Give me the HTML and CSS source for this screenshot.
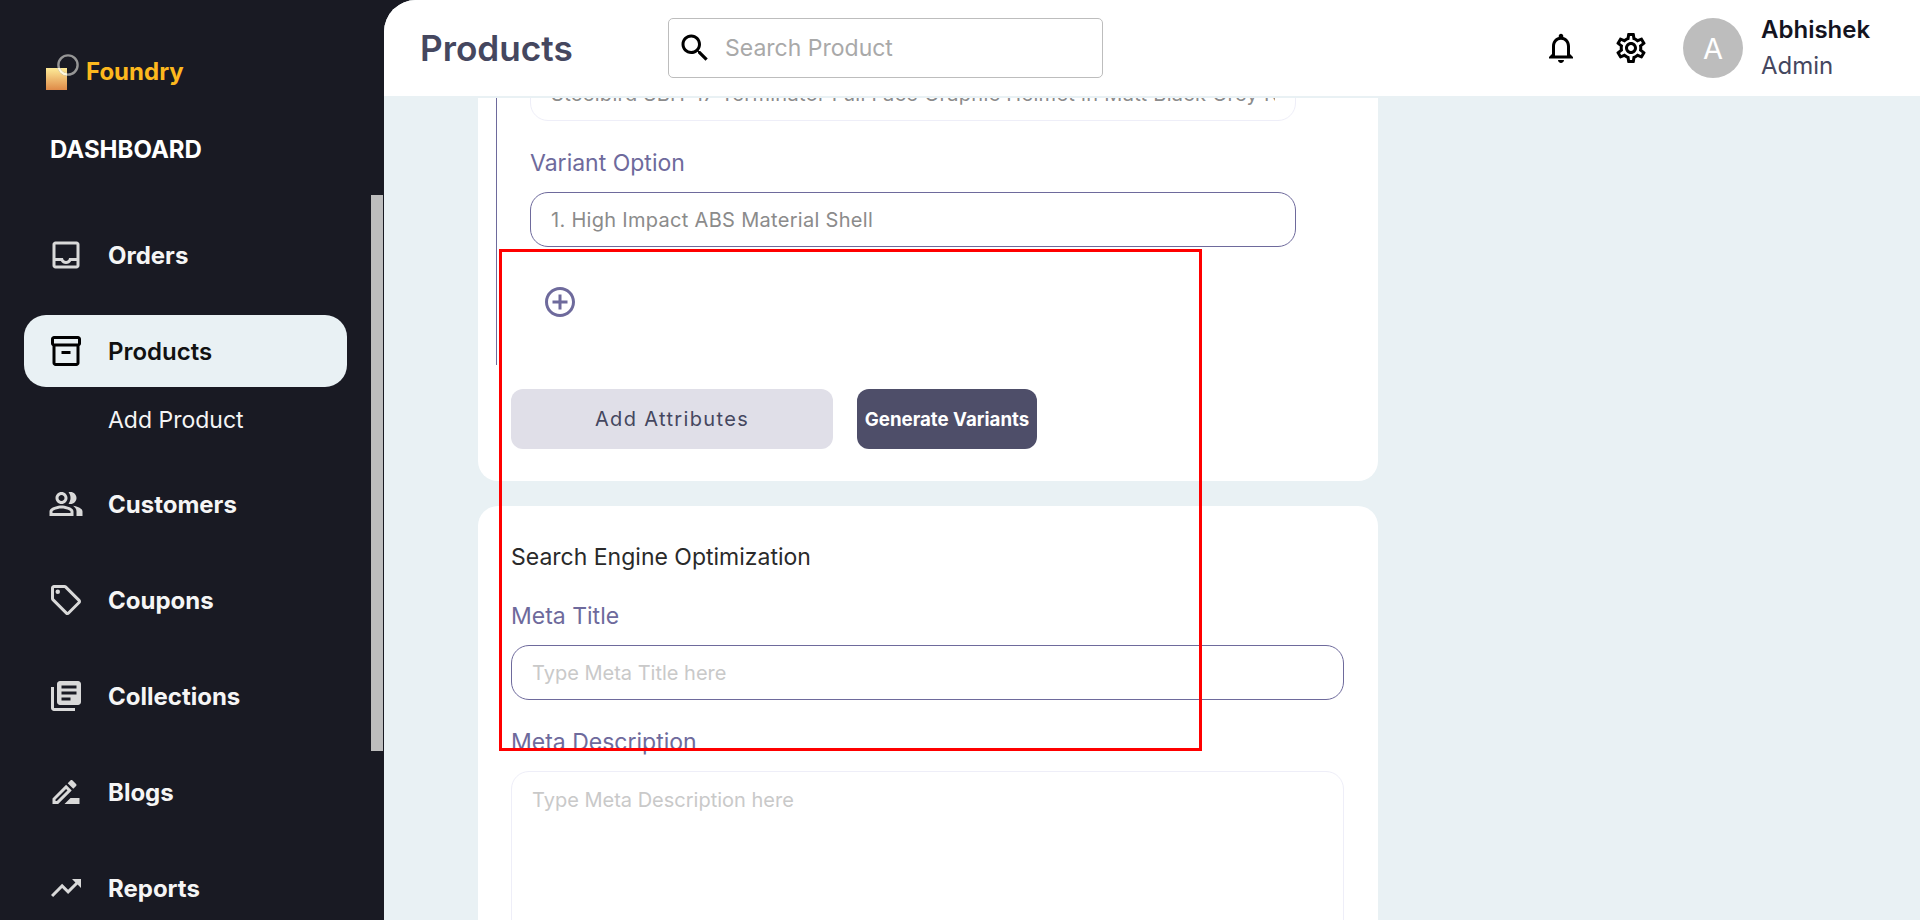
FILE: index.html
```html
<!DOCTYPE html>
<html lang="en">
<head>
  <meta charset="UTF-8">
  <meta name="viewport" content="width=device-width, initial-scale=1">
  <title>Foundry | Products</title>
  <link rel="stylesheet" href="styles.css">
</head>

<body>

<div class="app">

  <!-- Sidebar -->
  <aside class="sidebar">
    <div class="logo">
      <svg class="logo-mark" viewBox="0 0 46 40" width="46" height="40">
        <defs>
          <linearGradient id="logoFill" x1="0" y1="0" x2="0" y2="1">
            <stop offset="0" stop-color="#fdeb98"/>
            <stop offset="1" stop-color="#df8a48"/>
          </linearGradient>
          <clipPath id="logoClip"><rect x="0" y="16" width="21" height="22"/></clipPath>
        </defs>
        <rect x="0" y="16" width="21" height="22" fill="url(#logoFill)"/>
        <circle cx="22" cy="13" r="9.6" fill="none" stroke="#969696" stroke-width="2.4"/>
        <circle cx="22" cy="13" r="9.6" fill="none" stroke="#fff8dc" stroke-width="2.4" clip-path="url(#logoClip)"/>
      </svg>
      <span class="logo-name">Foundry</span>
    </div>
    <div class="dashboard-link">DASHBOARD</div>

    <nav class="nav">
      <a class="nav-item">
        <svg viewBox="0 0 24 24"><path d="M19 3H5c-1.1 0-2 .9-2 2v14c0 1.1.9 2 2 2h14c1.1 0 2-.9 2-2V5c0-1.1-.9-2-2-2zm0 16H5v-3h3.56c.69 1.19 1.97 2 3.45 2s2.75-.81 3.45-2H19v3zm0-5h-4.99c0 1.1-.9 2-2 2s-2-.9-2-2H5V5h14v9z"/></svg>
        Orders
      </a>
      <div class="nav-group">
        <a class="nav-item active">
          <svg viewBox="0 0 24 24"><path d="M20 2H4c-1 0-2 .9-2 2v3.01c0 .72.43 1.34 1 1.69V20c0 1.1 1.1 2 2 2h14c.9 0 2-.9 2-2V8.7c.57-.35 1-.97 1-1.69V4c0-1.1-1-2-2-2zm-1 18H5V9h14v11zm1-13H4V4h16v3z"/><path d="M9 12h6v2H9z"/></svg>
          Products
        </a>
        <a class="nav-sub">Add Product</a>
      </div>
      <a class="nav-item">
        <svg viewBox="0 0 24 24"><path d="M16.67 13.13C18.04 14.06 19 15.32 19 17v3h4v-3c0-2.18-3.57-3.47-6.33-3.87z"/><path d="M15 12c2.21 0 4-1.79 4-4s-1.79-4-4-4c-.47 0-.91.1-1.33.24C14.5 5.27 15 6.58 15 8s-.5 2.73-1.33 3.76c.42.14.86.24 1.33.24z"/><path d="M9 12c2.21 0 4-1.79 4-4s-1.79-4-4-4-4 1.79-4 4 1.79 4 4 4zm0-6c1.1 0 2 .9 2 2s-.9 2-2 2-2-.9-2-2 .9-2 2-2z"/><path d="M9 13c-2.67 0-8 1.34-8 4v3h16v-3c0-2.66-5.33-4-8-4zm6 5H3v-.99C3.2 16.29 6.3 15 9 15s5.8 1.29 6 2v1z"/></svg>
        Customers
      </a>
      <a class="nav-item">
        <svg viewBox="0 0 24 24"><path d="M21.41 11.58l-9-9C12.05 2.22 11.55 2 11 2H4c-1.1 0-2 .9-2 2v7c0 .55.22 1.05.59 1.42l9 9c.36.36.86.58 1.41.58s1.05-.22 1.41-.59l7-7c.37-.36.59-.86.59-1.41s-.23-1.06-.59-1.42zM13 20.01L4 11V4h7v-.01l9 9-7 7.02z"/><circle cx="6.5" cy="6.5" r="1.5"/></svg>
        Coupons
      </a>
      <a class="nav-item">
        <svg viewBox="0 0 24 24"><path d="M4 6H2v14c0 1.1.9 2 2 2h14v-2H4V6zm16-4H8c-1.1 0-2 .9-2 2v12c0 1.1.9 2 2 2h12c1.1 0 2-.9 2-2V4c0-1.1-.9-2-2-2zm-1 9H9V9h10v2zm-4 4H9v-2h6v2zm4-8H9V5h10v2z"/></svg>
        Collections
      </a>
      <a class="nav-item">
        <svg viewBox="0 0 24 24"><path d="M15 16l-4 4h10v-4h-6zm-2.94-8.81L3 16.25V20h3.75l9.06-9.06-3.75-3.75zM5.92 18H5v-.92l7.06-7.06.92.92L5.92 18zm12.79-9.96c.39-.39.39-1.02 0-1.41l-2.34-2.34c-.2-.2-.45-.29-.71-.29s-.51.1-.7.29l-1.83 1.83 3.75 3.75 1.83-1.83z"/></svg>
        Blogs
      </a>
      <a class="nav-item">
        <svg viewBox="0 0 24 24"><path d="M16 6l2.29 2.29-4.88 4.88-4-4L2 16.59 3.41 18l6-6 4 4 6.3-6.29L22 12V6z"/></svg>
        Reports
      </a>
    </nav>
    <div class="sidebar-thumb"></div>
  </aside>

  <!-- Main -->
  <main class="main">
    <header class="topbar">
      <h1 class="page-title">Products</h1>
      <div class="search">
        <svg class="icon-36" viewBox="0 0 24 24"><path d="M15.5 14h-.79l-.28-.27C15.41 12.59 16 11.11 16 9.5 16 5.91 13.09 3 9.5 3S3 5.91 3 9.5 5.91 16 9.5 16c1.61 0 3.09-.59 4.23-1.57l.27.28v.79l5 4.99L20.49 19l-4.99-5zm-6 0C7.01 14 5 11.99 5 9.5S7.01 5 9.5 5 14 7.01 14 9.5 11.99 14 9.5 14z"/></svg>
        <input class="search-input" type="text" placeholder="Search Product">
      </div>
      <div class="topbar-right">
        <svg class="icon-36" viewBox="0 0 24 24"><path d="M12 22c1.1 0 2-.9 2-2h-4c0 1.1.9 2 2 2zm6-6v-5c0-3.07-1.63-5.64-4.5-6.32V4c0-.83-.67-1.5-1.5-1.5s-1.5.67-1.5 1.5v.68C7.64 5.36 6 7.92 6 11v5l-2 2v1h16v-1l-2-2zm-2 1H8v-6c0-2.48 1.51-4.5 4-4.5s4 2.02 4 4.5v6z"/></svg>
        <svg class="icon-36" viewBox="0 0 24 24"><path d="M19.43 12.98c.04-.32.07-.64.07-.98 0-.34-.03-.66-.07-.98l2.11-1.65c.19-.15.24-.42.12-.64l-2-3.46c-.09-.16-.26-.25-.44-.25-.06 0-.12.01-.17.03l-2.49 1c-.52-.4-1.08-.73-1.69-.98l-.38-2.65C14.46 2.18 14.25 2 14 2h-4c-.25 0-.46.18-.49.42l-.38 2.65c-.61.25-1.17.59-1.69.98l-2.49-1c-.06-.02-.12-.03-.18-.03-.17 0-.34.09-.43.25l-2 3.46c-.13.22-.07.49.12.64l2.11 1.65c-.04.32-.07.65-.07.98 0 .33.03.66.07.98l-2.11 1.65c-.19.15-.24.42-.12.64l2 3.46c.09.16.26.25.44.25.06 0 .12-.01.17-.03l2.49-1c.52.4 1.08.73 1.69.98l.38 2.65c.03.24.24.42.49.42h4c.25 0 .46-.18.49-.42l.38-2.65c.61-.25 1.17-.59 1.69-.98l2.49 1c.06.02.12.03.18.03.17 0 .34-.09.43-.25l2-3.46c.12-.22.07-.49-.12-.64l-2.11-1.65zm-1.98-1.71c.04.31.05.52.05.73 0 .21-.02.43-.05.73l-.14 1.13.89.7 1.08.84-.7 1.21-1.27-.51-1.04-.42-.9.68c-.43.32-.84.56-1.25.73l-1.06.43-.16 1.13-.2 1.35h-1.4l-.19-1.35-.16-1.13-1.06-.43c-.43-.18-.83-.41-1.23-.71l-.91-.7-1.06.43-1.27.51-.7-1.21 1.08-.84.89-.7-.14-1.13c-.03-.31-.05-.54-.05-.74s.02-.43.05-.73l.14-1.13-.89-.7-1.08-.84.7-1.21 1.27.51 1.04.42.9-.68c.43-.32.84-.56 1.25-.73l1.06-.43.16-1.13.2-1.35h1.39l.19 1.35.16 1.13 1.06.43c.43.18.83.41 1.23.71l.91.7 1.06-.43 1.27-.51.7 1.21-1.07.85-.89.7.14 1.13zM12 8c-2.21 0-4 1.79-4 4s1.79 4 4 4 4-1.79 4-4-1.79-4-4-4zm0 6c-1.1 0-2-.9-2-2s.9-2 2-2 2 .9 2 2-.9 2-2 2z"/></svg>
        <div class="user">
          <div class="avatar">A</div>
          <div class="user-text">
            <div class="user-name">Abhishek</div>
            <div class="user-role">Admin</div>
          </div>
        </div>
      </div>
    </header>

    <div class="content">
      <section class="card card-scrolled">
        <div class="variant-block">
          <input class="field field-light" type="text" value="Steelbird SBH-17 Terminator Full Face Graphic Helmet in Matt Black Grey Neon">
          <label class="field-label variant-label">Variant Option</label>
          <input class="field" type="text" value="1. High Impact ABS Material Shell">
          <svg class="add-icon" viewBox="0 0 24 24"><path d="M13 7h-2v4H7v2h4v4h2v-4h4v-2h-4V7zm-1-5C6.48 2 2 6.48 2 12s4.48 10 10 10 10-4.48 10-10S17.52 2 12 2zm0 18c-4.41 0-8-3.59-8-8s3.59-8 8-8 8 3.59 8 8-3.59 8-8 8z"/></svg>
        </div>
        <div class="card-actions">
          <button class="btn btn-light">Add Attributes</button>
          <button class="btn btn-dark">Generate Variants</button>
        </div>
      </section>

      <section class="card seo-card">
        <h2 class="card-title">Search Engine Optimization</h2>
        <label class="field-label meta-title-label">Meta Title</label>
        <input class="field" type="text" placeholder="Type Meta Title here">
        <label class="field-label meta-desc-label">Meta Description</label>
        <textarea class="field field-light field-area" placeholder="Type Meta Description here"></textarea>
      </section>
    </div>
  </main>
</div>

<!-- red highlight box from the screenshot -->
<div class="highlight"></div>

</body>
</html>
```

FILE: styles.css
```css
* {
  box-sizing: border-box;
}
body {
  font-family: 'Inter', sans-serif;
  margin: 0;
  padding: 0;
  background: #191a23;
  height: 920px;
  overflow: hidden;
}
.app {
  display: flex;
  height: 920px;
}

/* sidebar */
.sidebar {
  position: relative;
  width: 384px;
  flex-shrink: 0;
  padding: 0 37px 0 24px;
  overflow: hidden;
}
.logo {
  display: flex;
  align-items: flex-start;
  padding: 52px 0 0 22px;
  height: 92px;
}
.logo-name {
  margin: 6px 0 0 -6px;
  font-size: 24px;
  line-height: 28px;
  font-weight: 700;
  color: #fdb81e;
}
.dashboard-link {
  margin: 42px 0 0 26px;
  font-size: 24px;
  line-height: 32px;
  font-weight: 700;
  color: #fff;
}
.nav {
  display: flex;
  flex-direction: column;
  gap: 24px;
  margin-top: 53px;
}
.nav-item {
  display: flex;
  align-items: center;
  gap: 24px;
  height: 72px;
  flex-shrink: 0;
  padding-left: 24px;
  border-radius: 22px;
  font-size: 24px;
  font-weight: 700;
  color: #f5f5f5;
}
.nav-item svg {
  width: 36px;
  height: 36px;
  fill: #d9d9d9;
  flex-shrink: 0;
}
.nav-item.active {
  background: #e9f1f4;
  color: #111;
  font-weight: 600;
}
.nav-item.active svg {
  fill: #000;
}
.nav-sub {
  display: block;
  padding: 19px 0 10px 84px;
  font-size: 23px;
  line-height: 28px;
  color: #f5f5f5;
}
.sidebar-thumb {
  position: absolute;
  left: 371px;
  top: 195px;
  width: 12px;
  height: 556px;
  background: #bdbdbd;
}

/* main area */
.main {
  flex: 1;
  min-width: 0;
  display: flex;
  flex-direction: column;
  background: #e9f1f4;
  border-top-left-radius: 32px;
  overflow: hidden;
}
.topbar {
  display: flex;
  align-items: center;
  height: 98px;
  flex-shrink: 0;
  padding: 0 36px;
  background: white;
  border-bottom: 2px solid #e9f1f4;
}
.page-title {
  width: 248px;
  margin: 0;
  font-size: 35.2px;
  font-weight: 600;
  color: #45475f;
}
.icon-36 {
  width: 36px;
  height: 36px;
  flex-shrink: 0;
}
.search {
  display: flex;
  align-items: center;
  gap: 12px;
  width: 435px;
  height: 60px;
  padding-left: 8px;
  border: 1px solid #bdbdbd;
  border-radius: 5px;
}
.search-input {
  flex: 1;
  min-width: 0;
  border: none;
  outline: none;
  padding: 0;
  font-family: inherit;
  font-size: 23px;
}
.search-input::placeholder {
  color: #a9a9a9;
}
.topbar-right {
  display: flex;
  align-items: center;
  gap: 34px;
  margin-left: auto;
}
.user {
  display: flex;
  align-items: center;
  gap: 18px;
  width: 201px;
}
.avatar {
  display: flex;
  align-items: center;
  justify-content: center;
  width: 60px;
  height: 60px;
  border-radius: 50%;
  background: #bdbdbd;
  color: white;
  font-size: 29px;
}
.user-name {
  font-size: 24px;
  line-height: 36px;
  font-weight: 600;
  color: #14141f;
}
.user-role {
  font-size: 24px;
  line-height: 36px;
  color: #45475f;
}

/* content */
.content {
  flex: 1;
  min-height: 0;
  padding-left: 94px;
  overflow: hidden;
}
.card {
  width: 900px;
  background: white;
  border-radius: 20px;
}
.card-scrolled {
  margin-top: -62px;
  padding: 0 0 32px 18px;
}
.variant-block {
  height: 329px;
  padding: 30px 0 0 33px;
  border-left: 1px solid #6e6a9c;
}
.field {
  display: block;
  width: 833px;
  height: 55px;
  padding: 0 20px;
  border: 1px solid #6e6a9c;
  border-radius: 18px;
  outline: none;
  background: white;
  font-family: inherit;
  font-size: 20px;
  letter-spacing: 0.3px;
  color: #8b8b8b;
}
.variant-block .field {
  width: 766px;
}
.field::placeholder {
  color: #c9c9c9;
  letter-spacing: 0;
}
.field-light {
  border-color: #eeeef8;
}
.field-area {
  height: 240px;
  padding-top: 16px;
  resize: none;
}
.field-label {
  display: block;
  font-size: 23px;
  line-height: 28px;
  color: #6e6a9c;
}
.variant-label {
  margin: 28px 0 15px;
}
.add-icon {
  display: block;
  width: 36px;
  height: 36px;
  margin: 37px 0 0 12px;
  fill: #6e6a9c;
}
.card-actions {
  display: flex;
  gap: 24px;
  margin: 24px 0 0 15px;
}
.btn {
  height: 60px;
  border: none;
  border-radius: 12px;
  font-family: inherit;
  cursor: pointer;
}
.btn-light {
  width: 322px;
  background: #e0dfe8;
  color: #45475f;
  font-size: 20px;
  font-weight: 400;
  letter-spacing: 1.35px;
}
.btn-dark {
  width: 180px;
  padding: 0;
  background: #4e4e69;
  color: white;
  font-size: 18.7px;
  font-weight: 700;
}
.seo-card {
  margin-top: 25px;
  padding: 0 33px;
}
.card-title {
  margin: 0;
  padding-top: 36px;
  font-size: 23px;
  line-height: 30px;
  font-weight: 400;
  color: #2a2a2a;
}
.meta-title-label {
  margin: 30px 0 15px;
}
.meta-desc-label {
  margin: 28px 0 15px;
}

.highlight {
  position: absolute;
  left: 499px;
  top: 249px;
  width: 703px;
  height: 502px;
  border: 3px solid #f00;
}
```
